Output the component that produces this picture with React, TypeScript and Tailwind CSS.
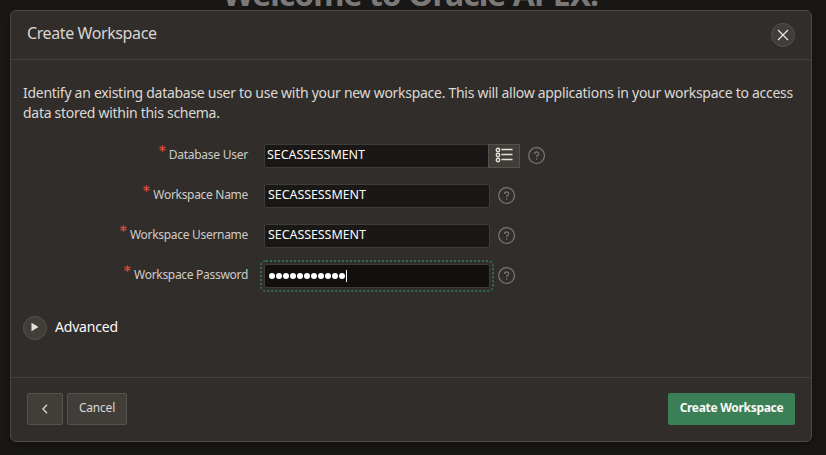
import React from "react";

function HelpIcon() {
  return (
    <svg width="18" height="18" viewBox="0 0 18 18" fill="none" stroke="#7b7773" strokeWidth="1.2" className="shrink-0">
      <circle cx="8.6" cy="8.6" r="7.9" />
      <path d="M6.5 6.9c0-1.3.9-2.1 2.1-2.1s2.1.8 2.1 1.9c0 1.5-2.1 1.6-2.1 3.2" />
      <path d="M8.6 11.3v1.4" />
    </svg>
  );
}

function ListIcon() {
  return (
    <svg width="18" height="16" viewBox="0 0 18 16" fill="none" stroke="#e4e1dd" className="-mt-0.5">
      <g strokeWidth="1.4">
        <circle cx="3" cy="3" r="1.7" />
        <circle cx="3" cy="8" r="1.7" />
        <circle cx="3" cy="13" r="1.7" />
      </g>
      <path d="M6.5 2.5h11M6.5 7.5h11M6.5 12.5h11" strokeWidth="1.3" />
    </svg>
  );
}

function Asterisk() {
  return (
    <svg width="7" height="7" viewBox="0 0 7 7" stroke="#cf4937" strokeWidth="1.4" className="mr-[3px] mt-px">
      <path d="M3.5.3v6.4M.6 1.9l5.8 3.2M.6 5.1l5.8-3.2" />
    </svg>
  );
}

function Field({ label, tracking, children }: { label: string; tracking: string; children: React.ReactNode }) {
  return (
    <div className="flex h-10 items-start">
      <div className="flex w-[237px] justify-end">
        <Asterisk />
        <span className={`text-[12px] leading-[22px] text-[#cfccc8] whitespace-nowrap ${tracking}`}>{label}</span>
      </div>
      <div className="ml-4 flex items-center">{children}</div>
    </div>
  );
}

const inputBase = "h-6 border border-[#3f3c38] rounded-[2px] bg-[#191816] text-[12.5px] leading-[20px] text-[#fbf9f8] tracking-[-0.08px]";

export default function App() {
  return (
    <div className="h-[455px] w-[826px] overflow-hidden bg-[#191816] font-['Noto_Sans','Open_Sans',sans-serif]">
      <div className="relative h-[455px]">
        <h1 className="-mt-[30px] h-[40px] pr-[5px] text-center text-[32px] font-bold leading-[48px] text-[#7c7b7a] whitespace-nowrap tracking-[-1px]">
          Welcome to Oracle APEX!
        </h1>
        <section className="relative ml-[10px] flex h-[432px] w-[802px] flex-col rounded-[6px] border border-[#4b4845] bg-[#312d2a] shadow-[0_4px_12px_rgba(0,0,0,0.3)]">
          <header className="flex h-[49px] items-center justify-between border-b border-[#45413d] pl-4 pr-4">
            <h2 className="-mt-[3px] text-[16px] leading-6 text-[#d8d5d1] tracking-[-0.4px]">Create Workspace</h2>
            <button className="flex h-6 w-6 items-center justify-center rounded-full border border-[#55514c] bg-[#413e39]">
              <svg width="12" height="12" viewBox="0 0 12 12" stroke="#eae7e3" strokeWidth="1.2">
                <path d="M1 1l10 10M11 1L1 11" />
              </svg>
            </button>
          </header>
          <main className="h-[318px] px-3 pt-[23px]">
            <p className="text-[14px] leading-5 text-[#dcd9d5] whitespace-nowrap tracking-[-0.284px]">
              Identify an existing database user to use with your new workspace. This will allow applications in your workspace to access
              <br />
              data stored within this schema.
            </p>
            <div className="-ml-3 mt-[21px]">
              <Field label="Database User" tracking="tracking-[-0.25px]">
                <div className={`${inputBase} w-[225px] pl-0.5`}>SECASSESSMENT</div>
                <button className="-ml-px flex h-6 w-8 items-center justify-center border border-[#55514b] bg-[#403c38]">
                  <ListIcon />
                </button>
                <span className="ml-2"><HelpIcon /></span>
              </Field>
              <Field label="Workspace Name" tracking="tracking-[-0.3px]">
                <div className={`${inputBase} w-[226px] pl-[3px]`}>SECASSESSMENT</div>
                <span className="ml-2"><HelpIcon /></span>
              </Field>
              <Field label="Workspace Username" tracking="tracking-[-0.3px]">
                <div className={`${inputBase} w-[226px] pl-[3px]`}>SECASSESSMENT</div>
                <span className="ml-2"><HelpIcon /></span>
              </Field>
              <Field label="Workspace Password" tracking="tracking-[-0.3px]">
                <div className="flex h-6 w-[226px] items-center rounded-[2px] border border-[#3f3c38] bg-[#11100e] pl-1 outline-2 outline-dotted outline-offset-2 outline-[#34704f]">
                  <div className="flex gap-[1.5px]">
                    {Array.from({ length: 11 }, (_, i) => (
                      <span key={i} className="h-[5.5px] w-[5.5px] rounded-full bg-white" />
                    ))}
                  </div>
                  <span className="ml-px h-3 w-px bg-white" />
                </div>
                <span className="ml-2"><HelpIcon /></span>
              </Field>
            </div>
            <div className="mt-3 flex items-center">
              <button className="flex h-6 w-6 items-center justify-center rounded-full border border-[#55514c] bg-[#413e39]">
                <svg width="8" height="10" viewBox="0 0 8 10" fill="#e4e1dd" className="-mt-0.5"><path d="M.5.8v8.4L7.5 5z" /></svg>
              </button>
              <span className="-mt-0.5 ml-2 text-[14px] leading-5 text-[#fbf9f8] tracking-[-0.2px]">Advanced</span>
            </div>
          </main>
          <footer className="flex h-[64px] items-start border-t border-[#45413d] px-4 pt-[15px]">
            <button className="flex h-8 w-9 items-center justify-center rounded-[2px] border border-[#55514c] bg-[#413e39]">
              <svg width="8" height="12" viewBox="0 0 8 12" fill="none" stroke="#dcd9d5" strokeWidth="1.3"><path d="M6 1.8L2 6l4 4.2" /></svg>
            </button>
            <button className="ml-1 h-8 w-[60px] rounded-[2px] border border-[#55514c] bg-[#413e39] pb-[3px] text-[12px] leading-4 text-[#dcd9d5] tracking-[-0.2px]">
              Cancel
            </button>
            <button className="ml-auto h-8 w-[127px] rounded-[2px] bg-[#3a7f55] pb-[3px] text-[12px] font-bold leading-4 text-[#fbf9f8] whitespace-nowrap tracking-[-0.3px]">
              Create Workspace
            </button>
          </footer>
        </section>
      </div>
    </div>
  );
}
